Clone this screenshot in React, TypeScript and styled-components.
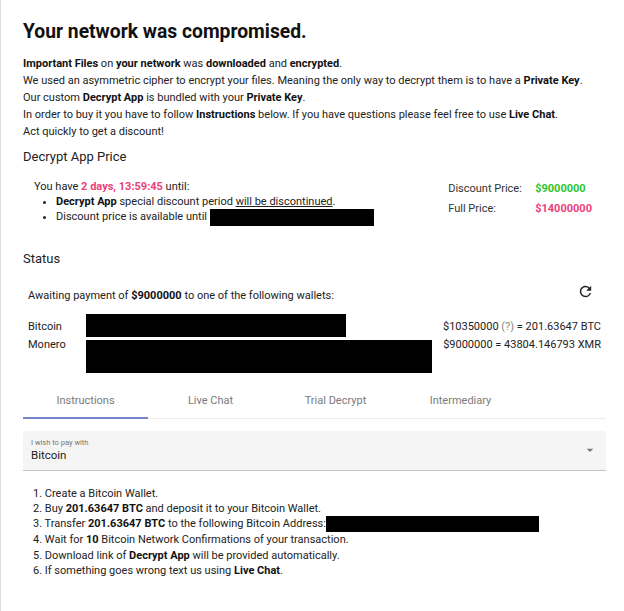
import React from "react";
import styled, { createGlobalStyle } from "styled-components";
import { MdRefresh, MdArrowDropDown } from "react-icons/md";

const Global = createGlobalStyle`
  html, body { margin: 0; padding: 0; background: #fff; }
  body { font-family: Roboto, "Noto Sans", Arial, sans-serif; color: #212121; }
`;

const Page = styled.div`
  box-sizing: border-box;
  min-height: 611px;
  border-left: 1px solid #dcdcdc;
  padding: 18px 18px 0 22px;
`;

const Title = styled.h1`
  margin: 0;
  font-size: 19.3px;
  line-height: 28px;
  font-weight: 700;
  color: #111;
`;

const Intro = styled.div`
  margin-top: 8.5px;
  font-size: 11px;
  line-height: 17px;
  color: #222;
`;

const Line = styled.div``;

const B = styled.b`
  font-weight: 700;
  color: #111;
`;

const Heading = styled.h2<{ $top: number }>`
  margin: ${(p) => p.$top}px 0 0 0;
  font-size: 13px;
  line-height: 18px;
  font-weight: 400;
  color: #222;
`;

const PriceRow = styled.div`
  display: flex;
  justify-content: space-between;
  align-items: flex-start;
  margin-top: 12.5px;
`;

const Countdown = styled.div`
  padding-left: 11px;
  font-size: 11px;
  line-height: 15px;
  color: #222;
`;

const Pink = styled.span`
  color: #ec407a;
  font-weight: 700;
`;

const Bullets = styled.ul`
  margin: 0;
  padding-left: 22px;
  list-style: disc;
`;

const Underlined = styled.span`
  text-decoration: underline;
`;

const Redact = styled.span<{ $w: number; $h: number }>`
  display: inline-block;
  vertical-align: middle;
  width: ${(p) => p.$w}px;
  height: ${(p) => p.$h}px;
  background: #000;
`;

const PriceTable = styled.div`
  display: grid;
  grid-template-columns: 87px auto;
  align-content: start;
  row-gap: 5px;
  margin-top: 2px;
  margin-right: 14px;
  font-size: 11px;
  line-height: 15px;
  color: #333;
`;

const Value = styled.span<{ $color: string }>`
  color: ${(p) => p.$color};
  font-weight: 700;
`;

const AwaitRow = styled.div`
  display: flex;
  justify-content: space-between;
  align-items: center;
  margin-top: 20.5px;
  padding-left: 5px;
  padding-right: 12px;
  font-size: 11px;
  line-height: 15px;
  color: #222;
`;

const RefreshIcon = styled(MdRefresh)`
  width: 17px;
  height: 17px;
  color: #222;
  margin-top: -8px;
`;

const Wallets = styled.div`
  margin-top: 10.5px;
  display: flex;
  flex-direction: column;
  gap: 3px;
  padding-left: 5px;
  padding-right: 5px;
`;

const WalletRow = styled.div<{ $labelTop: number }>`
  display: grid;
  grid-template-columns: 58px 1fr auto;
  align-items: start;
  font-size: 11px;
  line-height: 15px;
  color: #222;
  & > span:first-child,
  & > span:last-child {
    margin-top: ${(p) => p.$labelTop}px;
  }
`;

const Block = styled.div<{ $w: number; $h: number }>`
  width: ${(p) => p.$w}px;
  height: ${(p) => p.$h}px;
  background: #000;
`;

const Muted = styled.span`
  color: #888;
`;

const Tabs = styled.div`
  display: flex;
  margin-top: 12px;
  border-bottom: 1px solid #ececec;
`;

const Tab = styled.div<{ $active?: boolean }>`
  width: 125px;
  height: 34px;
  box-sizing: border-box;
  display: flex;
  align-items: center;
  justify-content: center;
  font-size: 11px;
  color: #7a7a7a;
  border-bottom: 2px solid ${(p) => (p.$active ? "#7986cb" : "transparent")};
  margin-bottom: -1px;
`;

const Select = styled.div`
  margin-top: 12px;
  box-sizing: border-box;
  height: 40px;
  background: #f5f5f5;
  border-bottom: 1px solid #c4c4c4;
  border-radius: 3px 3px 0 0;
  display: flex;
  align-items: center;
  justify-content: space-between;
  padding: 0 8px 0 8px;
`;

const SelectText = styled.div`
  display: flex;
  flex-direction: column;
  margin-top: 1px;
`;

const SelectLabel = styled.span`
  font-size: 7.5px;
  line-height: 10px;
  color: #777;
`;

const SelectValue = styled.span`
  font-size: 11.5px;
  line-height: 15px;
  color: #222;
`;

const Arrow = styled(MdArrowDropDown)`
  width: 16px;
  height: 16px;
  color: #777;
`;

const Steps = styled.ol`
  margin: 15px 0 0 0;
  padding-left: 10px;
  list-style: none;
  font-size: 11px;
  line-height: 15.4px;
  color: #222;
`;

export default function App() {
  return (
    <>
      <Global />
      <Page>
        <Title>Your network was compromised.</Title>
        <Intro>
          <Line>
            <B>Important Files</B> on <B>your network</B> was <B>downloaded</B> and <B>encrypted</B>.
          </Line>
          <Line>
            We used an asymmetric cipher to encrypt your files. Meaning the only way to decrypt them is to have a{" "}
            <B>Private Key</B>.
          </Line>
          <Line>
            Our custom <B>Decrypt App</B> is bundled with your <B>Private Key</B>.
          </Line>
          <Line>
            In order to buy it you have to follow <B>Instructions</B> below. If you have questions please feel free to use{" "}
            <B>Live Chat</B>.
          </Line>
          <Line>Act quickly to get a discount!</Line>
        </Intro>

        <Heading $top={8.5}>Decrypt App Price</Heading>
        <PriceRow>
          <Countdown>
            You have <Pink>2 days, 13:59:45</Pink> until:
            <Bullets>
              <li>
                <B>Decrypt App</B> special discount period <Underlined>will be discontinued</Underlined>.
              </li>
              <li>
                Discount price is available until <Redact $w={164} $h={17} />
              </li>
            </Bullets>
          </Countdown>
          <PriceTable>
            <span>Discount Price:</span>
            <Value $color="#2ec52e">$9000000</Value>
            <span>Full Price:</span>
            <Value $color="#ec407a">$14000000</Value>
          </PriceTable>
        </PriceRow>

        <Heading $top={24}>Status</Heading>
        <AwaitRow>
          <span>
            Awaiting payment of <B>$9000000</B> to one of the following wallets:
          </span>
          <RefreshIcon />
        </AwaitRow>
        <Wallets>
          <WalletRow $labelTop={5}>
            <span>Bitcoin</span>
            <Block $w={260} $h={23} />
            <span>
              $10350000 <Muted>(?)</Muted> = 201.63647 BTC
            </span>
          </WalletRow>
          <WalletRow $labelTop={-2.5}>
            <span>Monero</span>
            <Block $w={346} $h={33} />
            <span>$9000000 = 43804.146793 XMR</span>
          </WalletRow>
        </Wallets>

        <Tabs>
          <Tab $active>Instructions</Tab>
          <Tab>Live Chat</Tab>
          <Tab>Trial Decrypt</Tab>
          <Tab>Intermediary</Tab>
        </Tabs>

        <Select>
          <SelectText>
            <SelectLabel>I wish to pay with</SelectLabel>
            <SelectValue>Bitcoin</SelectValue>
          </SelectText>
          <Arrow />
        </Select>

        <Steps>
          <li>1. Create a Bitcoin Wallet.</li>
          <li>
            2. Buy <B>201.63647 BTC</B> and deposit it to your Bitcoin Wallet.
          </li>
          <li>
            3. Transfer <B>201.63647 BTC</B> to the following Bitcoin Address:
            <Redact $w={213} $h={16} />
          </li>
          <li>
            4. Wait for <B>10</B> Bitcoin Network Confirmations of your transaction.
          </li>
          <li>
            5. Download link of <B>Decrypt App</B> will be provided automatically.
          </li>
          <li>
            6. If something goes wrong text us using <B>Live Chat</B>.
          </li>
        </Steps>
      </Page>
    </>
  );
}
